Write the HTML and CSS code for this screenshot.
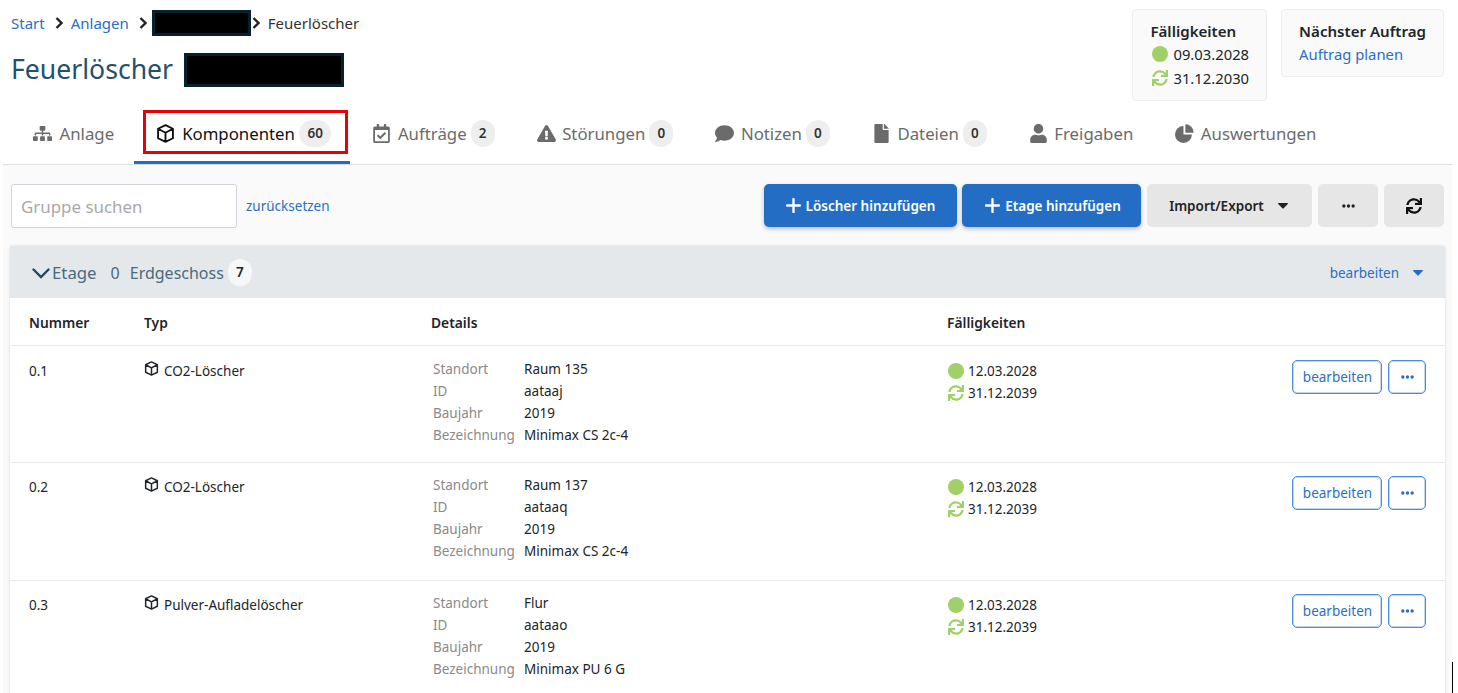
FILE: index.html
```html
<!DOCTYPE html>
<html lang="de">
<head>
    <meta charset="UTF-8">
    <title>Feuerlöscher</title>
    <link rel="stylesheet" href="styles.css">
</head>
<body>

<!-- Icons -->
<svg class="sprite" xmlns="http://www.w3.org/2000/svg">
    <symbol id="i-sitemap" viewBox="0 0 640 512"><path d="M128 352H32c-17.67 0-32 14.33-32 32v96c0 17.67 14.33 32 32 32h96c17.67 0 32-14.33 32-32v-96c0-17.67-14.33-32-32-32zm-24-80h192v48h48v-48h192v48h48v-57.59c0-21.17-17.23-38.41-38.41-38.41H344v-64h40c17.67 0 32-14.33 32-32V32c0-17.67-14.33-32-32-32H256c-17.67 0-32 14.33-32 32v96c0 17.67 14.33 32 32 32h40v64H94.41C73.23 224 56 241.23 56 262.41V320h48v-48zm264 80h-96c-17.67 0-32 14.33-32 32v96c0 17.67 14.33 32 32 32h96c17.67 0 32-14.33 32-32v-96c0-17.67-14.33-32-32-32zm240 0h-96c-17.67 0-32 14.33-32 32v96c0 17.67 14.33 32 32 32h96c17.67 0 32-14.33 32-32v-96c0-17.67-14.33-32-32-32z"/></symbol>
    <symbol id="i-cube" viewBox="0 0 20 20"><path d="M10 1.2l7.800 3.800v10L10 18.800 2.200 15V5zM2.200 5L10 9.200 17.800 5M10 9.200v9.600" fill="none" stroke="currentColor" stroke-width="2" stroke-linejoin="round"/></symbol>
    <symbol id="i-calendar" viewBox="0 0 448 512"><path d="M400 64h-48V12c0-6.627-5.373-12-12-12h-40c-6.627 0-12 5.373-12 12v52H160V12c0-6.627-5.373-12-12-12h-40c-6.627 0-12 5.373-12 12v52H48C21.49 64 0 85.49 0 112v352c0 26.51 21.49 48 48 48h352c26.51 0 48-21.49 48-48V112c0-26.51-21.49-48-48-48zm-6 400H54a6 6 0 0 1-6-6V160h352v298a6 6 0 0 1-6 6zm-52.849-200.65L198.842 404.519c-4.705 4.667-12.303 4.637-16.971-.068l-75.091-75.699c-4.667-4.705-4.637-12.303.068-16.971l22.719-22.536c4.705-4.667 12.303-4.637 16.97.069l44.104 44.461 111.072-110.181c4.705-4.667 12.303-4.637 16.971.068l22.536 22.718c4.667 4.705 4.636 12.303-.069 16.97z"/></symbol>
    <symbol id="i-warning" viewBox="0 0 576 512"><path d="M569.517 440.013C587.975 472.007 564.806 512 527.94 512H48.054c-36.937 0-59.999-40.055-41.577-71.987L246.423 23.985c18.467-32.009 64.72-31.951 83.154 0l239.94 416.028zM288 354c-25.405 0-46 20.595-46 46s20.595 46 46 46 46-20.595 46-46-20.595-46-46-46zm-43.673-165.346l7.418 136c.347 6.364 5.609 11.346 11.982 11.346h48.546c6.373 0 11.635-4.982 11.982-11.346l7.418-136c.375-6.874-5.098-12.654-11.982-12.654h-63.383c-6.884 0-12.356 5.78-11.981 12.654z"/></symbol>
    <symbol id="i-comment" viewBox="0 0 512 512"><path d="M256 32C114.600 32 0 125.100 0 240c0 49.600 21.400 95 57 130.700C44.500 421.100 2.700 466 2.200 466.500c-2.200 2.300-2.800 5.700-1.500 8.700S4.800 480 8 480c66.300 0 116-31.800 140.600-51.400 32.700 12.300 69 19.400 107.400 19.400 141.400 0 256-93.100 256-208S397.400 32 256 32z"/></symbol>
    <symbol id="i-file" viewBox="0 0 384 512"><path d="M224 136V0H24C10.700 0 0 10.700 0 24v464c0 13.300 10.700 24 24 24h336c13.300 0 24-10.700 24-24V160H248c-13.200 0-24-10.800-24-24zm160-14.100v6.100H256V0h6.100c6.400 0 12.500 2.500 17 7l97.900 98c4.500 4.500 7 10.600 7 16.900z"/></symbol>
    <symbol id="i-user" viewBox="0 0 448 512"><path d="M224 256c70.700 0 128-57.300 128-128S294.700 0 224 0 96 57.300 96 128s57.300 128 128 128zm89.600 32h-16.700c-22.200 10.200-46.900 16-72.900 16s-50.600-5.800-72.900-16h-16.700C60.200 288 0 348.200 0 422.400V464c0 26.500 21.500 48 48 48h352c26.500 0 48-21.500 48-48v-41.600c0-74.200-60.200-134.400-134.400-134.400z"/></symbol>
    <symbol id="i-pie" viewBox="0 0 20 20"><path d="M8.900 2.200A8.900 8.900 0 1 0 17.800 11.100H8.900z"/><path d="M10.900.3A8.800 8.800 0 0 1 19.700 9.100h-8.800z"/></symbol>
    <symbol id="i-sync" viewBox="0 0 512 512"><path d="M440.650 12.570l4 82.770A247.160 247.160 0 0 0 255.830 8C134.730 8 33.910 94.920 12.290 209.820A12 12 0 0 0 24.090 224h49.050a12 12 0 0 0 11.670-9.260 175.910 175.910 0 0 1 317-56.940l-101.460-4.860a12 12 0 0 0-12.570 12v47.410a12 12 0 0 0 12 12H500a12 12 0 0 0 12-12V12a12 12 0 0 0-12-12h-47.370a12 12 0 0 0-11.980 12.570zM255.830 432a175.610 175.610 0 0 1-146-77.800l101.800 4.870a12 12 0 0 0 12.570-12v-47.400a12 12 0 0 0-12-12H12a12 12 0 0 0-12 12V500a12 12 0 0 0 12 12h47.350a12 12 0 0 0 12-12.600l-4.150-82.570A247.170 247.170 0 0 0 255.830 504c121.110 0 221.930-86.920 243.550-201.820a12 12 0 0 0-11.800-14.180h-49.050a12 12 0 0 0-11.670 9.260A175.860 175.860 0 0 1 255.830 432z"/></symbol>
    <symbol id="i-plus" viewBox="0 0 14 14"><path d="M7 1v12M1 7h12" fill="none" stroke="currentColor" stroke-width="2.200" stroke-linecap="round"/></symbol>
    <symbol id="i-dots" viewBox="0 0 14 4"><circle cx="2" cy="2" r="1.800"/><circle cx="7" cy="2" r="1.800"/><circle cx="12" cy="2" r="1.800"/></symbol>
    <symbol id="i-caret" viewBox="0 0 10 6"><path d="M.6 0h8.800c.5 0 .8.600.4 1L5.400 5.600c-.2.200-.6.200-.8 0L.2 1C-.2.600.1 0 .6 0z"/></symbol>
    <symbol id="i-chevron" viewBox="0 0 18 11"><path d="M1.500 1.500L9 9l7.500-7.500" fill="none" stroke="currentColor" stroke-width="2.400" stroke-linecap="round"/></symbol>
    <symbol id="i-angle" viewBox="0 0 8 12"><path d="M1.500 1L6.500 6l-5 5" fill="none" stroke="currentColor" stroke-width="2.400"/></symbol>
</svg>

<!-- Page head -->
<div class="page-head">
    <div class="head-left">
        <nav class="breadcrumb">
            <a href="#">Start</a>
            <svg class="crumb-sep"><use href="#i-angle"/></svg>
            <a href="#">Anlagen</a>
            <svg class="crumb-sep"><use href="#i-angle"/></svg>
            <span class="redacted redacted-crumb"></span>
            <svg class="crumb-sep crumb-sep-tight"><use href="#i-angle"/></svg>
            <span>Feuerlöscher</span>
        </nav>
        <div class="title-row">
            <h1>Feuerlöscher</h1>
            <span class="redacted redacted-title"></span>
        </div>
    </div>
    <div class="summary-boxes">
        <div class="summary-box">
            <strong>Fälligkeiten</strong>
            <div class="due-line"><span class="dot"></span>09.03.2028</div>
            <div class="due-line"><svg class="sync-green"><use href="#i-sync"/></svg>31.12.2030</div>
        </div>
        <div class="summary-box">
            <strong>Nächster Auftrag</strong>
            <div><a href="#">Auftrag planen</a></div>
        </div>
    </div>
</div>

<!-- Tabs -->
<div class="tabs">
    <a class="tab" href="#"><svg class="tab-icon"><use href="#i-sitemap"/></svg>Anlage</a>
    <a class="tab active" href="#"><svg class="tab-icon"><use href="#i-cube"/></svg>Komponenten<span class="badge">60</span><span class="highlight"></span></a>
    <a class="tab" href="#"><svg class="tab-icon"><use href="#i-calendar"/></svg>Aufträge<span class="badge">2</span></a>
    <a class="tab" href="#"><svg class="tab-icon"><use href="#i-warning"/></svg>Störungen<span class="badge">0</span></a>
    <a class="tab" href="#"><svg class="tab-icon"><use href="#i-comment"/></svg>Notizen<span class="badge">0</span></a>
    <a class="tab" href="#"><svg class="tab-icon"><use href="#i-file"/></svg>Dateien<span class="badge">0</span></a>
    <a class="tab" href="#"><svg class="tab-icon"><use href="#i-user"/></svg>Freigaben</a>
    <a class="tab" href="#"><svg class="tab-icon"><use href="#i-pie"/></svg>Auswertungen</a>
</div>

<div class="content">

    <!-- Toolbar -->
    <div class="toolbar">
        <input class="search" type="text" placeholder="Gruppe suchen">
        <a class="reset" href="#">zurücksetzen</a>
        <div class="toolbar-buttons">
            <button class="btn btn-primary btn-add1"><svg class="btn-plus"><use href="#i-plus"/></svg>Löscher hinzufügen</button>
            <button class="btn btn-primary btn-add2"><svg class="btn-plus"><use href="#i-plus"/></svg>Etage hinzufügen</button>
            <button class="btn btn-grey btn-import">Import/Export<svg class="btn-caret"><use href="#i-caret"/></svg></button>
            <button class="btn btn-grey btn-small"><svg class="btn-dots"><use href="#i-dots"/></svg></button>
            <button class="btn btn-grey btn-small"><svg class="btn-sync"><use href="#i-sync"/></svg></button>
        </div>
    </div>

    <!-- Floor card -->
    <div class="card">
        <div class="card-head">
            <svg class="chevron"><use href="#i-chevron"/></svg>
            <span class="floor-label">Etage</span>
            <span class="floor-no">0</span>
            <span class="floor-name">Erdgeschoss</span>
            <span class="badge badge-white">7</span>
            <a class="card-edit" href="#">bearbeiten<svg class="edit-caret"><use href="#i-caret"/></svg></a>
        </div>
        <table class="components">
            <thead>
                <tr>
                    <th class="col-num">Nummer</th>
                    <th class="col-type">Typ</th>
                    <th class="col-details">Details</th>
                    <th class="col-due">Fälligkeiten</th>
                    <th></th>
                </tr>
            </thead>
            <tbody>
                <tr>
                    <td class="cell-top">0.1</td>
                    <td class="cell-top"><svg class="type-icon"><use href="#i-cube"/></svg>CO2-Löscher</td>
                    <td>
                        <div class="details">
                            <span>Standort</span><span>Raum 135</span>
                            <span>ID</span><span>aataaj</span>
                            <span>Baujahr</span><span>2019</span>
                            <span>Bezeichnung</span><span>Minimax CS 2c-4</span>
                        </div>
                    </td>
                    <td class="cell-top">
                        <div class="due-line"><span class="dot"></span>12.03.2028</div>
                        <div class="due-line"><svg class="sync-green"><use href="#i-sync"/></svg>31.12.2039</div>
                    </td>
                    <td class="cell-actions">
                        <button class="btn-outline">bearbeiten</button>
                        <button class="btn-outline btn-outline-dots"><svg class="btn-dots"><use href="#i-dots"/></svg></button>
                    </td>
                </tr>
                <tr>
                    <td class="cell-top">0.2</td>
                    <td class="cell-top"><svg class="type-icon"><use href="#i-cube"/></svg>CO2-Löscher</td>
                    <td>
                        <div class="details">
                            <span>Standort</span><span>Raum 137</span>
                            <span>ID</span><span>aataaq</span>
                            <span>Baujahr</span><span>2019</span>
                            <span>Bezeichnung</span><span>Minimax CS 2c-4</span>
                        </div>
                    </td>
                    <td class="cell-top">
                        <div class="due-line"><span class="dot"></span>12.03.2028</div>
                        <div class="due-line"><svg class="sync-green"><use href="#i-sync"/></svg>31.12.2039</div>
                    </td>
                    <td class="cell-actions">
                        <button class="btn-outline">bearbeiten</button>
                        <button class="btn-outline btn-outline-dots"><svg class="btn-dots"><use href="#i-dots"/></svg></button>
                    </td>
                </tr>
                <tr>
                    <td class="cell-top">0.3</td>
                    <td class="cell-top"><svg class="type-icon"><use href="#i-cube"/></svg>Pulver-Aufladelöscher</td>
                    <td>
                        <div class="details">
                            <span>Standort</span><span>Flur</span>
                            <span>ID</span><span>aataao</span>
                            <span>Baujahr</span><span>2019</span>
                            <span>Bezeichnung</span><span>Minimax PU 6 G</span>
                        </div>
                    </td>
                    <td class="cell-top">
                        <div class="due-line"><span class="dot"></span>12.03.2028</div>
                        <div class="due-line"><svg class="sync-green"><use href="#i-sync"/></svg>31.12.2039</div>
                    </td>
                    <td class="cell-actions">
                        <button class="btn-outline">bearbeiten</button>
                        <button class="btn-outline btn-outline-dots"><svg class="btn-dots"><use href="#i-dots"/></svg></button>
                    </td>
                </tr>
            </tbody>
        </table>
    </div>
</div>

<span class="edge-mark"></span>

</body>
</html>
```

FILE: styles.css
```css
html, body { margin: 0; height: 100%; overflow: hidden; }
body { font-family: "Noto Sans", Arial, sans-serif; font-size: 13.5px; color: #212529; background: #fff; position: relative; }
a { color: #2a6fc4; text-decoration: none; }
button { font-family: inherit; cursor: pointer; }
svg { fill: currentColor; }
.sprite { display: none; }

/* page head */
.page-head { display: flex; justify-content: space-between; height: 110px; padding: 9px 14px 0 11px; box-sizing: border-box; }
.breadcrumb { display: flex; align-items: center; height: 28px; font-size: 15px; color: #333; }
.crumb-sep { width: 8px; height: 12px; margin: 0 8px 0 10px; color: #222; }
.crumb-sep-tight { margin: 0 8px 0 1px; }
.redacted { display: inline-block; background: #000; border: 3px solid #06222f; box-sizing: border-box; }
.redacted-crumb { width: 99px; height: 26px; margin-left: -3px; }
.redacted-title { width: 160px; height: 34px; margin: 2px 0 0 11px; }
.title-row { display: flex; align-items: center; margin-top: 8px; }
h1 { margin: 0; font-size: 26.6px; font-weight: 400; color: #24506b; line-height: 48px; }
.summary-boxes { display: flex; align-items: flex-start; gap: 14px; }
.summary-box { background: #fafafa; border: 1px solid #eee; border-radius: 4px; padding: 11px 17px 10px; line-height: 24px; font-size: 14.8px; }
.summary-box strong { display: block; font-weight: 600; line-height: 21px; font-size: 15.1px; }
.summary-box .due-line { height: 24px; }
.summary-box .dot, .summary-box .sync-green { margin-left: 2px; }
.due-line { display: flex; align-items: center; height: 22px; }
.dot { width: 16px; height: 16px; border-radius: 50%; background: #a0d067; margin: 0 4px 0 1px; }
.sync-green { width: 16px; height: 16px; color: #a0d067; margin: 0 4px 0 1px; }
.summary-box .dot, .summary-box .sync-green { margin-right: 5px; }

/* tabs */
.tabs { display: flex; height: 55px; margin: 0 6px 0 3px; border-bottom: 1px solid #ddd; box-sizing: border-box; padding-left: 9px; }
.tab { display: flex; align-items: center; height: 54px; box-sizing: border-box; padding: 0 21px 8px; font-size: 16.8px; color: #6b6b6b; position: relative; white-space: nowrap; }
.tab.active { color: #111; border-bottom: 3px solid #236ec4; padding: 0 19px 5px 22px; margin: 0 1px 0 -1px; }
.tab-icon { width: 19px; height: 19px; margin-right: 6.5px; flex: none; }
.tab:first-child .tab-icon { margin-right: 7.5px; }
.tab.active .tab-icon { margin-right: 7px; }
.tab.active .badge { padding: 0 8.5px; }
.badge { display: inline-flex; align-items: center; justify-content: center; min-width: 24px; height: 27px; padding: 0 8px; margin-left: 4px; box-sizing: border-box; border-radius: 14px; background: #eee; color: #333; font-size: 13.5px; font-weight: 600; }
.highlight { position: absolute; left: 9px; right: 2px; top: 0; height: 44px; border: 3px solid #e8000d; box-sizing: border-box; }

/* toolbar */
.content { margin: 0 6px 0 3px; padding: 19px 7px 0; background: #fafafa; height: 528px; box-sizing: border-box; overflow: hidden; }
.toolbar { display: flex; align-items: center; height: 44px; margin: 0 1px 18px 1px; }
.search { width: 226px; height: 44px; box-sizing: border-box; padding: 0 9px; border: 1px solid #ced4da; border-radius: 3px; font-family: inherit; font-size: 16.9px; background: #fff; }
.search::placeholder { color: #a9a9a9; }
.reset { margin-left: 9px; font-size: 13.5px; }
.toolbar-buttons { margin-left: auto; display: flex; gap: 6px; align-self: flex-start; }
.btn { height: 43px; border: 0; border-radius: 5px; font-size: 13.5px; font-weight: 600; display: flex; align-items: center; justify-content: center; padding: 0; }
.btn-primary { background: #236ec4; color: #fff; box-shadow: 0 2px 4px rgba(0,0,0,.25); }
.btn-grey { background: #e6e6e6; color: #222; }
.btn-add1 { width: 193px; margin-right: -1px; }
.btn-add2 { width: 179px; padding-left: 3px; }
.btn-import { width: 165px; padding-right: 2px; }
.btn-small { width: 60px; }
.btn-plus { width: 15px; height: 15px; margin-right: 5px; }
.btn-caret { width: 10px; height: 6px; margin-left: 14px; }
.btn-dots { width: 13px; height: 4px; }
.btn-sync { width: 16px; height: 16px; color: #111; }

/* card */
.card { background: #fff; box-shadow: 0 0 3px rgba(0,0,0,.15); border-radius: 4px 4px 0 0; }
.card-head { display: flex; align-items: center; height: 52px; padding: 2px 22px 0 22px; box-sizing: border-box; background: #e4e8ea; font-size: 16px; color: #4a6a7e; }
.chevron { width: 18px; height: 11px; margin-right: 2px; color: #1f4a63; }
.floor-label { font-size: 16.8px; margin-top: -2px; }
.floor-no { margin-left: 14px; }
.floor-name { margin-left: 10px; }
.badge-white { background: #f6f7f7; margin-left: 4px; color: #222; margin-top: -2px; }
.card-edit { margin-left: auto; font-size: 13.5px; display: flex; align-items: center; margin-top: -1px; }
.edit-caret { width: 10px; height: 6px; margin-left: 14px; color: #236ec4; }

/* table */
.components { width: 100%; table-layout: fixed; border-collapse: collapse; }
.components th { height: 47px; box-sizing: border-box; padding: 2px 0 0; text-align: left; font-weight: 600; font-size: 13.8px; border-bottom: 1px solid #e9ecef; }
.components th:first-child, .components td:first-child { padding-left: 19px; }
.col-num { width: 134px; }
.col-type { width: 287px; }
.col-details { width: 516px; }
.col-due { width: 300px; }
/* first row sits 1px lower than the others */
.components tr { --shift: 0px; --row: 118px; }
.components tbody tr:first-child { --shift: 1px; --row: 117px; }
.components td { height: var(--row); box-sizing: border-box; padding: calc(11px + var(--shift)) 0 0; vertical-align: top; border-bottom: 1px solid #e9ecef; font-size: 13.5px; line-height: 22px; }
.components td.cell-top { padding-top: calc(13px + var(--shift)); }
.type-icon { width: 15px; height: 15px; margin: 0 5px -2px 0; vertical-align: 2px; }
.details { display: grid; grid-template-columns: 91px 1fr; padding-left: 2px; }
.details span:nth-child(odd) { color: #8a8a8a; }
.components td.cell-actions { text-align: right; padding: calc(13px + var(--shift)) 19px 0 0; white-space: nowrap; }
.btn-outline { height: 34px; width: 90px; border: 1px solid #4d8bd3; box-shadow: inset 0 0 0 1px rgba(77,139,211,.35); border-radius: 5px; background: #fff; color: #2a6fc4; font-size: 13.5px; padding: 0; margin-left: 2px; vertical-align: top; }
.btn-outline-dots { display: inline-flex; align-items: center; justify-content: center; width: 38px; color: #236ec4; }

.edge-mark { position: absolute; left: 1452px; top: 662px; width: 1px; height: 31px; background: #000; }
```
